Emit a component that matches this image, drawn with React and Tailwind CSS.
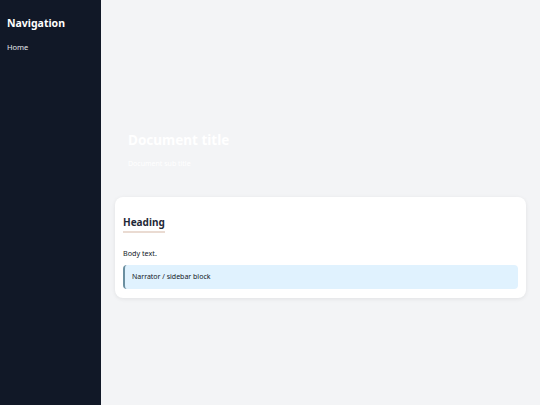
export default function App() {
  return (
    <div className="flex w-[540px] h-[405px] bg-[#f3f4f6]" style={{ fontFamily: '"Noto Sans", "Open Sans", sans-serif' }}>
      {/* Sidebar */}
      <aside className="w-[101px] shrink-0 bg-[#111827] px-[7px] pt-[16px]">
        <h2 className="text-[10.5px] font-bold text-white leading-[14px]">Navigation</h2>
        <nav className="mt-[12px]">
          <a className="block text-[7.5px] text-[#e5e7eb] leading-[10px]">Home</a>
        </nav>
      </aside>

      {/* Main */}
      <main className="flex-1 flex flex-col">
        <header className="h-[185px] flex flex-col justify-end px-[27px] pb-[16px]">
          <h1 className="text-[13.5px] font-bold text-white leading-[18px]">Document title</h1>
          <p className="mt-[10px] text-[7px] text-white leading-[10px]">Document sub title</p>
        </header>

        <section className="mx-[14px] mt-[12px] bg-white rounded-[8px] shadow-[0_1px_4px_rgba(0,0,0,0.08)] px-[8px] pt-[18px] pb-[9px]">
          <h3 className="w-fit text-[10px] font-bold text-[#1f2937] leading-[14px] pb-[2px] border-b-2 border-[#eadbd2]">Heading</h3>
          <p className="mt-[15px] text-[7.2px] text-[#111827] leading-[10px]">Body text.</p>
          <div className="mt-[7px] h-[24px] flex items-center bg-[#e0f2fe] border-l-2 border-[#6b8fa0] rounded-[4px] px-[7px]">
            <span className="text-[7px] text-[#111827] leading-[10px]">Narrator / sidebar block</span>
          </div>
        </section>
      </main>
    </div>
  );
}
